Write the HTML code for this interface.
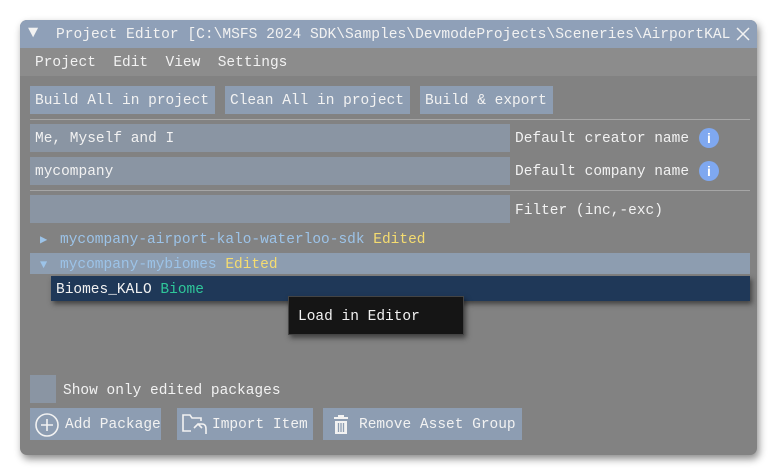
<!DOCTYPE html>
<html><head><meta charset="utf-8"><style>
*{margin:0;padding:0;box-sizing:border-box}
body{width:780px;height:476px;background:#fff;position:relative;overflow:hidden;font-family:"Liberation Mono",monospace;font-size:14.5px;color:#f2f2f2}
.a{position:absolute;white-space:nowrap;line-height:31px}
.win{position:absolute;left:20px;top:20px;width:737px;height:435px;background:#828282;border-radius:7px;box-shadow:2px 4px 8px rgba(0,0,0,.45);overflow:hidden}
.btn{position:absolute;white-space:nowrap;background:#8d9db2;height:28px;line-height:31px;padding-left:5px;color:#f2f2f2;overflow:hidden}
.inp{position:absolute;white-space:nowrap;background:#8a95a3;height:28px;line-height:31px;padding-left:5px;left:30px;width:480px;overflow:hidden}
.sep{position:absolute;left:30px;width:720px;height:1px;background:#a6a6a6}
.info{position:absolute;width:20px;height:20px;border-radius:50%;background:#7fa8f0;color:#fff;font:bold 14px "Liberation Sans",sans-serif;text-align:center;line-height:20px}
</style></head><body>
<div class="win"></div>
<div class="a" style="left:20px;top:20px;width:737px;height:28px;background:#8fa0b8;border-radius:7px 7px 0 0"></div>
<div class="a" style="left:28px;top:21px;font-size:17px;line-height:26px">&#9660;</div>
<div class="a" style="left:56px;top:21px;font-size:14.6px;line-height:29px">Project Editor [C:\MSFS 2024 SDK\Samples\DevmodeProjects\Sceneries\AirportKAL</div>
<svg style="position:absolute;left:736px;top:27px" width="14" height="14"><path d="M1 1L13 13M13 1L1 13" stroke="#f2f2f2" stroke-width="1.5"/></svg>
<div class="a" style="left:20px;top:48px;width:737px;height:28px;background:#8c8c8c"></div>
<div class="a" style="left:35px;top:48px">Project&nbsp;&nbsp;Edit&nbsp;&nbsp;View&nbsp;&nbsp;Settings</div>
<div class="btn" style="left:30px;top:86px;width:185px">Build All in project</div>
<div class="btn" style="left:225px;top:86px;width:185px">Clean All in project</div>
<div class="btn" style="left:420px;top:86px;width:133px">Build &amp; export</div>
<div class="sep" style="top:119px"></div>
<div class="inp" style="top:124px">Me, Myself and I</div>
<div class="a" style="left:515px;top:124px">Default creator name</div>
<div class="info" style="left:699px;top:128px">i</div>
<div class="inp" style="top:157px">mycompany</div>
<div class="a" style="left:515px;top:157px">Default company name</div>
<div class="info" style="left:699px;top:161px">i</div>
<div class="sep" style="top:190px"></div>
<div class="inp" style="top:195px"></div>
<div class="a" style="left:515px;top:196px">Filter (inc,-exc)</div>
<div class="a" style="left:40px;top:225px;font-size:12px;color:#9cc3e8">&#9654;</div>
<div class="a" style="left:60px;top:225px;color:#9cc3e8">mycompany-airport-kalo-waterloo-sdk <span style="color:#f5dc70">Edited</span></div>
<div class="a" style="left:30px;top:253px;width:720px;height:21px;background:#8d9db0"></div>
<div class="a" style="left:40px;top:250px;font-size:12px;color:#9cc3e8">&#9660;</div>
<div class="a" style="left:60px;top:250px;color:#9cc3e8">mycompany-mybiomes <span style="color:#f5dc70">Edited</span></div>
<div class="a" style="left:51px;top:276px;width:699px;height:25px;background:#1f3858;box-shadow:2px 3px 5px rgba(0,0,0,.5)"></div>
<div class="a" style="left:56px;top:275px">Biomes_KALO <span style="color:#2fc79a">Biome</span></div>
<div class="a" style="left:288px;top:296px;width:176px;height:39px;background:#151515;border:1px solid #444;box-shadow:2px 3px 5px rgba(0,0,0,.5)"></div>
<div class="a" style="left:298px;top:302px">Load in Editor</div>
<div class="a" style="left:30px;top:375px;width:26px;height:28px;background:#8a95a3"></div>
<div class="a" style="left:63px;top:376px">Show only edited packages</div>
<div class="btn" style="left:30px;top:408px;width:131px;height:32px;line-height:35px;padding-left:35px">Add Package</div>
<svg style="position:absolute;left:34px;top:412px" width="26" height="26"><circle cx="13" cy="13" r="11" fill="none" stroke="#f2f2f2" stroke-width="1.6"/><path d="M13 7V19M7 13H19" stroke="#f2f2f2" stroke-width="1.6"/></svg>
<div class="btn" style="left:177px;top:408px;width:136px;height:32px;line-height:35px;padding-left:35px">Import Item</div>
<svg style="position:absolute;left:181px;top:412px" width="28" height="26"><path d="M10 19H2V3H9L11 6H20V9" fill="none" stroke="#f2f2f2" stroke-width="1.6"/><path d="M13 16L17 12L21 16M17 12H21Q25 12 25 17V22" fill="none" stroke="#f2f2f2" stroke-width="1.6"/></svg>
<div class="btn" style="left:323px;top:408px;width:199px;height:32px;line-height:35px;padding-left:36px">Remove Asset Group</div>
<svg style="position:absolute;left:332px;top:414px" width="18" height="22"><rect x="2" y="3" width="14" height="2" fill="#f2f2f2"/><rect x="6" y="1" width="6" height="2" fill="#f2f2f2"/><path d="M3 7H15V20H3Z" fill="#f2f2f2"/><path d="M6.5 9V18M9 9V18M11.5 9V18" stroke="#8d9db2" stroke-width="1.3"/></svg>
</body></html>
